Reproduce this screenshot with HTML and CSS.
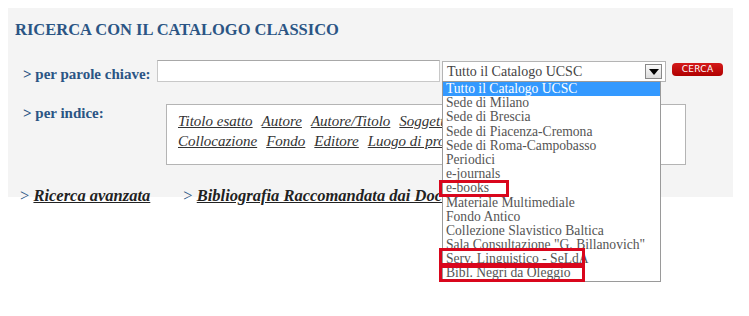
FILE: index.html
```html
<!DOCTYPE html>
<html>
<head>
<meta charset="utf-8">
<link rel="stylesheet" href="styles.css">
</head>
<body>
<div class="panel">
  <h1 class="title">RICERCA CON IL CATALOGO CLASSICO</h1>
  <div class="row row-keyword">
    <span class="label">&gt; per parole chiave:</span>
    <div class="input"></div>
    <div class="select">
      <span class="select-text">Tutto il Catalogo UCSC</span>
      <span class="select-btn"><svg width="10" height="6" viewBox="0 0 10 6"><path d="M0 0 H10 L5 6 Z" fill="#000"/></svg></span>
      <ul class="dropdown">
        <li class="sel">Tutto il Catalogo UCSC</li>
        <li>Sede di Milano</li>
        <li>Sede di Brescia</li>
        <li>Sede di Piacenza-Cremona</li>
        <li>Sede di Roma-Campobasso</li>
        <li>Periodici</li>
        <li>e-journals</li>
        <li>e-books</li>
        <li>Materiale Multimediale</li>
        <li>Fondo Antico</li>
        <li>Collezione Slavistico Baltica</li>
        <li>Sala Consultazione "G. Billanovich"</li>
        <li>Serv. Linguistico - SeLdA</li>
        <li>Bibl. Negri da Oleggio</li>
      </ul>
      <div class="mark mark-ebooks"></div>
      <div class="mark mark-serv"></div>
      <div class="mark mark-bibl"></div>
    </div>
    <span class="btn">CERCA</span>
  </div>
  <div class="row row-index">
    <span class="label">&gt; per indice:</span>
    <div class="indexbox">
      <div class="links"><a>Titolo esatto</a><a>Autore</a><a>Autore/Titolo</a><a>Soggetto</a></div>
      <div class="links"><a>Collocazione</a><a>Fondo</a><a>Editore</a><a>Luogo di produzione</a></div>
    </div>
  </div>
  <div class="row row-bottom">
    <span class="blink">&gt; <a>Ricerca avanzata</a></span>
    <span class="blink blink2">&gt; <a>Bibliografia Raccomandata dai Docenti</a></span>
  </div>
</div>
</body>
</html>
```
FILE: styles.css
```css
html, body { margin: 0; padding: 0; background: #fff; }
body {
  padding: 8px;
  min-height: 316px;
  box-sizing: border-box;
  font-family: "Liberation Serif", serif;
}
.panel {
  width: 725px;
  height: 189px;
  background: #f4f4f4;
  position: relative;
}
.title {
  margin: 0;
  padding: 12px 0 0 7px;
  font-size: 16.5px;
  line-height: 20px;
  font-weight: bold;
  color: #2b5584;
}
.row { display: flex; }
.label {
  color: #2b5584;
  font-weight: bold;
  font-size: 15px;
}
.row-keyword {
  margin-top: 20px;
  align-items: flex-start;
  padding-left: 15px;
}
.row-keyword .label { margin-top: 6px; width: 134px; white-space: nowrap; }
.input {
  width: 281px;
  height: 20px;
  background: #fff;
  border: 1px solid #c8c8c8;
  border-top-color: #a8a8a8;
}
.select {
  position: relative;
  margin-left: 2px;
  margin-top: 1px;
  width: 222px;
  height: 19px;
  background: #fff;
  border: 1px solid #b4b4b4;
  display: flex;
  align-items: center;
}
.select-text {
  flex: 1;
  padding-left: 4px;
  font-size: 14px;
  color: #444;
  line-height: 19px;
}
.select-btn {
  width: 15px;
  height: 13px;
  margin-right: 3px;
  border: 1px solid #888;
  background: linear-gradient(#fafafa, #dcdcdc);
  display: flex;
  align-items: center;
  justify-content: center;
}
.dropdown {
  position: absolute;
  left: -1px;
  top: 19px;
  width: 217px;
  margin: 0;
  padding: 0;
  list-style: none;
  background: #fff;
  border: 1px solid #9a9a9a;
  z-index: 2;
}
.dropdown li {
  font-size: 13.6px;
  line-height: 14.2px;
  height: 14.2px;
  padding-left: 3px;
  color: #555;
  white-space: nowrap;
}
.dropdown li.sel { background: #3399ff; color: #fff; }
.mark {
  position: absolute;
  border: 3px solid #d9061c;
  z-index: 3;
}
.mark-ebooks { left: -4px; top: 118px; width: 64px; height: 11px; }
.mark-serv { left: -4px; top: 186px; width: 140px; height: 12px; }
.mark-bibl { left: -4px; top: 203px; width: 140px; height: 11px; }
.btn {
  margin-left: 6px;
  margin-top: 3px;
  width: 51px;
  height: 13px;
  background: linear-gradient(#d41a1a, #b00000);
  border-radius: 4px;
  color: #fff;
  font-family: "DejaVu Sans", sans-serif;
  font-size: 9px;
  line-height: 13px;
  text-align: center;
  letter-spacing: 0.3px;
}
.row-index {
  margin-top: 18px;
  padding-left: 15px;
  align-items: flex-start;
}
.row-index .label { width: 143px; margin-top: 4px; }
.indexbox {
  margin-top: 3px;
  width: 507px;
  height: 53px;
  background: #fff;
  border: 1px solid #b4b4b4;
  padding: 6px 0 0 11px;
  overflow: hidden;
}
.links {
  white-space: nowrap;
  font-size: 15px;
  line-height: 20px;
}
.links a {
  font-style: italic;
  text-decoration: underline;
  color: #333;
  margin-right: 9px;
}
.row-bottom {
  margin-top: 21px;
  padding-left: 12px;
}
.blink {
  font-size: 16.5px;
  line-height: 20px;
  color: #2b5584;
}
.blink a {
  font-style: italic;
  font-weight: bold;
  text-decoration: underline;
  color: #222;
}
.blink2 { margin-left: 33px; }
```
